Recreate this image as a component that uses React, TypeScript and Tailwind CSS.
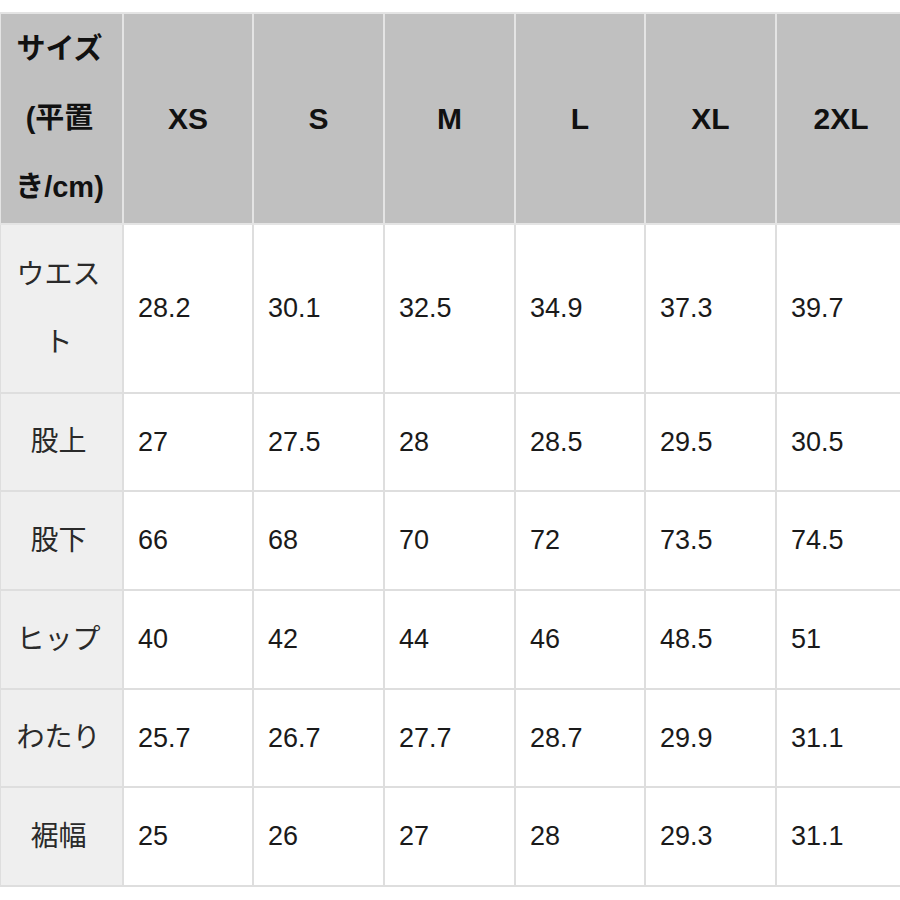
import React from "react";

const sizes = ["XS", "S", "M", "L", "XL", "2XL"];

const rows: { label: React.ReactNode; values: string[]; h: string }[] = [
  { label: <>ウエス<br />ト</>, values: ["28.2", "30.1", "32.5", "34.9", "37.3", "39.7"], h: "h-[169px]" },
  { label: "股上", values: ["27", "27.5", "28", "28.5", "29.5", "30.5"], h: "h-[98px]" },
  { label: "股下", values: ["66", "68", "70", "72", "73.5", "74.5"], h: "h-[99px]" },
  { label: "ヒップ", values: ["40", "42", "44", "46", "48.5", "51"], h: "h-[99px]" },
  { label: "わたり", values: ["25.7", "26.7", "27.7", "28.7", "29.9", "31.1"], h: "h-[98px]" },
  { label: "裾幅", values: ["25", "26", "27", "28", "29.3", "31.1"], h: "h-[99px]" },
];

export default function App() {
  return (
    <div
      className="w-[900px] h-[900px] overflow-hidden bg-white pt-[12px]"
      style={{ fontFamily: '"Liberation Sans", "Noto Sans CJK JP", sans-serif' }}
    >
      <table className="table-fixed border-collapse w-[906px] -ml-[1px]">
        <colgroup>
          <col className="w-[123px]" />
          <col className="w-[130px]" />
          <col className="w-[131px]" />
          <col className="w-[131px]" />
          <col className="w-[130px]" />
          <col className="w-[131px]" />
          <col className="w-[130px]" />
        </colgroup>
        <thead>
          <tr className="h-[211px]">
            <th className="bg-[#c0c0c0] border-2 border-[#e4e4e4] text-[29px] leading-[69px] font-bold text-[#111] text-center align-middle p-0 pr-[4px]">
              サイズ<br />(平置<br />き/cm)
            </th>
            {sizes.map((s) => (
              <th
                key={s}
                className="bg-[#c0c0c0] border-2 border-[#e4e4e4] text-[30px] font-bold text-[#111] text-center align-middle p-0"
              >
                {s}
              </th>
            ))}
          </tr>
        </thead>
        <tbody>
          {rows.map((r, i) => (
            <tr key={i} className={r.h}>
              <td className="bg-[#efefef] border-2 border-[#dedede] text-[28px] leading-[68px] text-[#2a2a2a] text-center align-middle p-0 pr-[6px]">
                {r.label}
              </td>
              {r.values.map((v, j) => (
                <td
                  key={j}
                  className="bg-white border-2 border-[#dedede] text-[27px] text-[#1a1a1a] text-left align-middle p-0 pl-[14px]"
                >
                  {v}
                </td>
              ))}
            </tr>
          ))}
        </tbody>
      </table>
    </div>
  );
}
